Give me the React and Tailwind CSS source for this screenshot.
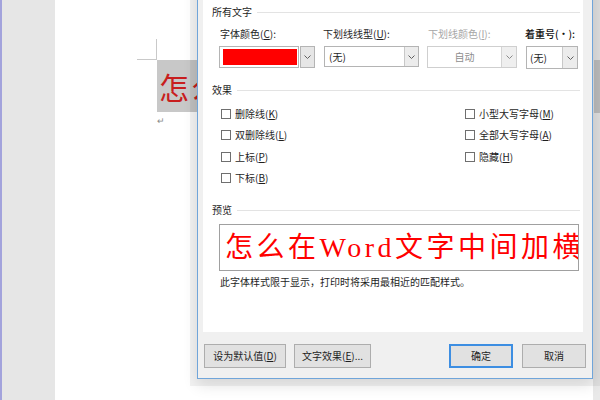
import React from "react";

const Chevron = ({ color = "#606060" }) => (
  <svg width="7" height="4" viewBox="0 0 7 4">
    <polyline points="0.5,0.5 3.5,3.5 6.5,0.5" fill="none" stroke={color} strokeWidth="1" />
  </svg>
);

const U = ({ children }) => <span className="underline underline-offset-1">{children}</span>;

const Header = ({ children, className = "" }) => (
  <div className={"flex items-center h-[14px] gap-[5px] " + className}>
    <span className="text-[10px] leading-[14px] text-[#1e1e1e] whitespace-nowrap">{children}</span>
    <div className="flex-1 h-px bg-[#e3e3e3]" />
  </div>
);

const Check = ({ children }) => (
  <div className="flex items-center h-[21.5px] gap-[4px]">
    <div className="w-[10px] h-[10px] border border-[#6f6f6f] bg-white" />
    <span className="text-[10px] leading-[14px] text-[#1e1e1e] whitespace-nowrap">{children}</span>
  </div>
);

export default function App() {
  return (
    <div className="relative w-[600px] h-[400px] overflow-hidden flex bg-white font-['Noto_Sans_CJK_SC',sans-serif]">
      {/* left gray margin */}
      <div className="w-[55px] h-full bg-[#e6e6e6] border-l-2 border-[#a3a3dc]" />

      {/* document page */}
      <div className="flex-1 h-full bg-white pl-[82px] pt-[39px]">
        <div className="w-[20px] h-[21px] border-r border-b border-[#c9c9c9]" />
        <div className="ml-[20px] w-[70px] h-[52px] bg-[#c8c8c8] flex items-center overflow-hidden pl-[2px]">
          <span className="text-[30px] leading-[30px] tracking-[2px] text-[#c81e1e] whitespace-nowrap">怎么在Word</span>
        </div>
        <div className="ml-[20px] mt-[4px] text-[9px] leading-[9px] text-[#8a8a8a]">↵</div>
      </div>

      {/* right scrollbar */}
      <div className="w-[7px] h-full bg-[#e9e9e9] pt-[60px]">
        <div className="h-[53px] ml-[1px] bg-[#c3c3c3]" />
      </div>

      {/* font dialog */}
      <div className="absolute left-[197px] top-[-30px] w-[396px] h-[409px] border border-[#70a5da] bg-[#f0f0f0] flex flex-col shadow-[0_0_0_7px_rgba(0,0,0,0.05),0_6px_14px_rgba(0,0,0,0.12)]">
        <div className="ml-[5px] mr-[9px] h-[361px] bg-white pl-[9px] pr-[3px] pt-[34px] flex flex-col">
          <Header>所有文字</Header>

          <div className="flex mt-[8px] ml-[7px] text-[10px] leading-[14px] text-[#1e1e1e]">
            <div className="flex flex-col w-[96px]">
              <div className="h-[14px] pl-[1px] whitespace-nowrap">字体颜色(<U>C</U>):</div>
              <div className="mt-[5px] h-[22px] flex gap-[1px]">
                <div className="flex-1 border border-[#b4b4b4] pl-[3px] pr-[1px] py-[2px] bg-white">
                  <div className="w-full h-full bg-[#ff0000]" />
                </div>
                <div className="w-[15px] border border-[#b4b4b4] bg-[#e6e6e6] flex items-center justify-center">
                  <Chevron />
                </div>
              </div>
            </div>

            <div className="flex flex-col w-[95px] ml-[9px]">
              <div className="h-[14px] whitespace-nowrap -ml-[1px]">下划线线型(<U>U</U>):</div>
              <div className="mt-[5px] h-[21px] flex border border-[#b4b4b4] bg-white">
                <div className="flex-1 pl-[4px] flex items-center">(无)</div>
                <div className="w-[14px] border-l border-[#c8c8c8] bg-[#ececec] flex items-center justify-center">
                  <Chevron />
                </div>
              </div>
            </div>

            <div className="flex flex-col w-[90px] ml-[8px]">
              <div className="h-[14px] pl-[1px] whitespace-nowrap text-[#a6a6a6]">下划线颜色(<U>I</U>):</div>
              <div className="mt-[5px] h-[22px] flex border border-[#cfcfcf] bg-white">
                <div className="flex-1 flex items-center justify-center text-[#8e8e8e]">自动</div>
                <div className="w-[15px] border-l border-[#d4d4d4] bg-[#efefef] flex items-center justify-center">
                  <Chevron color="#8a8a8a" />
                </div>
              </div>
            </div>

            <div className="flex flex-col w-[52px] ml-[9px]">
              <div className="h-[14px] -ml-[1px] whitespace-nowrap font-medium text-[#111]">着重号(·):</div>
              <div className="mt-[5px] h-[23px] flex border border-[#b4b4b4] bg-white">
                <div className="flex-1 pl-[3px] flex items-center">(无)</div>
                <div className="w-[15px] border-l border-[#c8c8c8] bg-[#ececec] flex items-center justify-center">
                  <Chevron />
                </div>
              </div>
            </div>
          </div>

          <Header className="mt-[14px]">效果</Header>

          <div className="flex mt-[6px] ml-[9px]">
            <div className="w-[244px] flex flex-col">
              <Check>删除线(<U>K</U>)</Check>
              <Check>双删除线(<U>L</U>)</Check>
              <Check>上标(<U>P</U>)</Check>
              <Check>下标(<U>B</U>)</Check>
            </div>
            <div className="flex flex-col">
              <Check>小型大写字母(<U>M</U>)</Check>
              <Check>全部大写字母(<U>A</U>)</Check>
              <Check>隐藏(<U>H</U>)</Check>
            </div>
          </div>

          <Header className="mt-[14px]">预览</Header>

          <div className="mt-[7px] ml-[7px] w-[360px] h-[47px] border border-[#a0a0a0] bg-white overflow-hidden flex items-center pl-[5px]">
            <span className="text-[28px] leading-[30px] tracking-[3.5px] text-[#ff0000] whitespace-nowrap font-['Liberation_Serif','Noto_Sans_CJK_SC',serif]">
              怎么在Word文字中间加横线
            </span>
          </div>

          <div className="mt-[4px] ml-[8px] h-[14px] text-[10px] leading-[14px] text-[#1e1e1e] whitespace-nowrap">
            此字体样式限于显示，打印时将采用最相近的匹配样式。
          </div>
        </div>

        <div className="flex items-start pl-[6px] pr-[6px] pt-[12px] text-[10px] leading-[14px] text-[#1e1e1e]">
          <div className="w-[82px] h-[24px] border border-[#adadad] bg-[#e1e1e1] flex items-center justify-center whitespace-nowrap">
            设为默认值(<U>D</U>)
          </div>
          <div className="w-[77px] h-[24px] ml-[8px] border border-[#adadad] bg-[#e1e1e1] flex items-center justify-center whitespace-nowrap">
            文字效果(<U>E</U>)...
          </div>
          <div className="flex-1" />
          <div className="w-[64px] h-[24px] border-2 border-[#3d8ee2] bg-[#e1e1e1] flex items-center justify-center">
            确定
          </div>
          <div className="w-[64px] h-[24px] ml-[9px] border border-[#adadad] bg-[#e1e1e1] flex items-center justify-center">
            取消
          </div>
        </div>
      </div>
    </div>
  );
}
